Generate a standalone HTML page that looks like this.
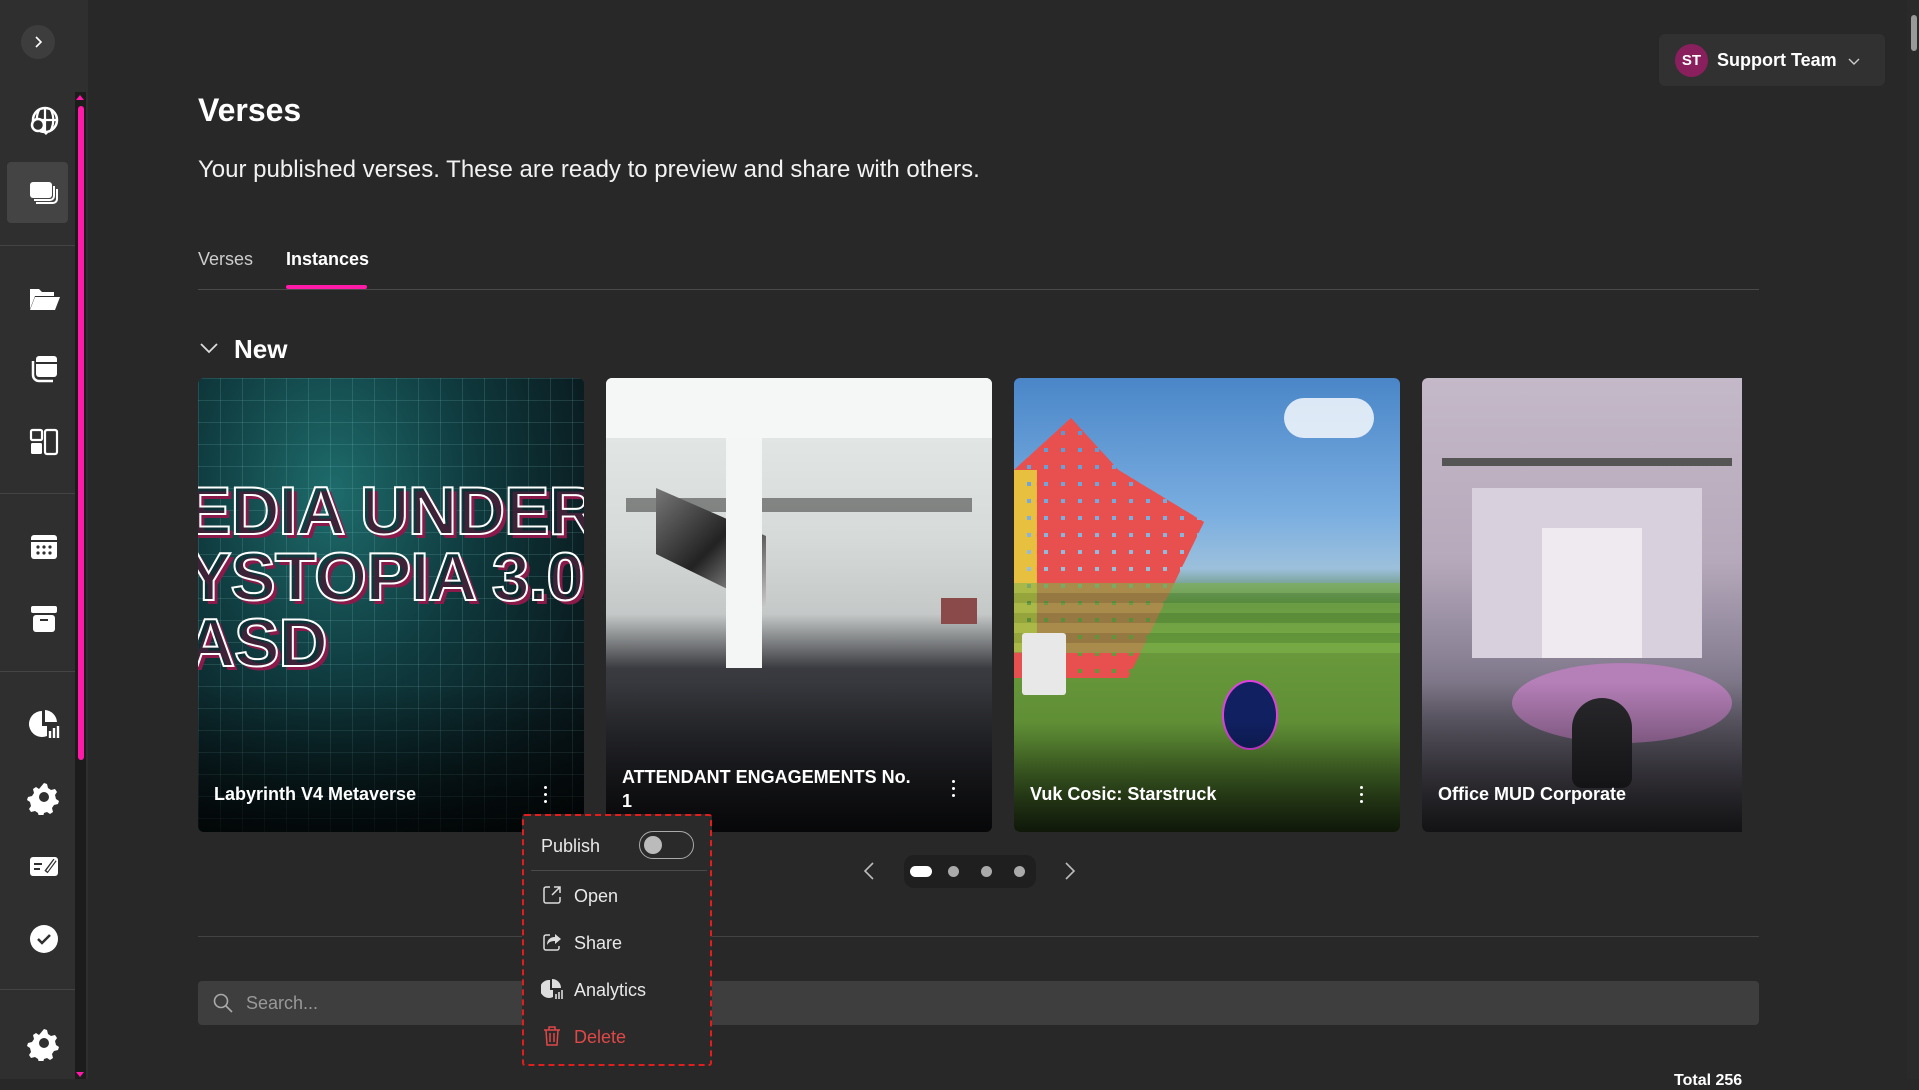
<!DOCTYPE html>
<html><head><meta charset="utf-8"><style>
*{box-sizing:border-box;margin:0;padding:0}
body{width:1919px;height:1079px;overflow:hidden;background:#282828;font-family:"Liberation Sans",sans-serif;color:#fff;position:relative}
.side{position:absolute;left:0;top:0;width:88px;height:1079px;background:#2f2f2f}
.track{position:absolute;left:75px;top:92px;width:11px;height:987px;background:#1c1c1c}
.thumb{position:absolute;left:78px;top:106px;width:6px;height:654px;background:#ff1aa8;border-radius:3px}
.sep{position:absolute;left:0;width:75px;height:1px;background:#444}
.ic{position:absolute;left:26px;width:36px;height:36px}
.abs{position:absolute}
.card{position:absolute;top:378px;height:454px;border-radius:6px;overflow:hidden}
.card .shade{position:absolute;left:0;right:0;bottom:0;height:150px;background:linear-gradient(rgba(0,0,0,0),rgba(0,0,0,.75))}
.card .t{position:absolute;left:16px;font-weight:bold;font-size:18px}
.dots3{position:absolute;width:4px}
.dots3 i{display:block;width:3px;height:3px;background:#fff;border-radius:50%;margin:0 0 4px}
.mi{position:absolute;left:541px;font-size:18px;color:#e8e8e8}
</style></head><body>
<div class="side">
  <div class="abs" style="left:21px;top:25px;width:34px;height:34px;border-radius:50%;background:#3d3d3d"></div>
  <svg class="abs" style="left:30px;top:34px" width="16" height="16" viewBox="0 0 16 16"><path d="M6 3l5 5-5 5" stroke="#fff" stroke-width="1.6" fill="none"/></svg>
  <div class="abs" style="left:7px;top:162px;width:61px;height:61px;border-radius:4px;background:#444"></div>
  <div class="sep" style="top:245px"></div><div class="sep" style="top:493px"></div><div class="sep" style="top:671px"></div><div class="sep" style="top:989px"></div>
  <svg class="ic" style="top:103px" viewBox="0 0 36 36"><circle cx="19" cy="17" r="12" fill="none" stroke="#fff" stroke-width="2.5"/><path d="M7 17h24M19 5v24M13 7c-3 6-3 14 0 20M25 7c3 6 3 14 0 20" stroke="#fff" stroke-width="2.2" fill="none"/><circle cx="12" cy="22" r="6" fill="#2f2f2f" stroke="#fff" stroke-width="2.5"/><path d="M16 26l5 5" stroke="#fff" stroke-width="3"/></svg>
  <svg class="ic" style="top:176px" viewBox="0 0 36 36"><rect x="4" y="6" width="22" height="16" rx="3" fill="#fff"/><path d="M28 10v10a4 4 0 0 1-4 4H8M31 13v10a4 4 0 0 1-4 4H10" stroke="#fff" stroke-width="2" fill="none"/></svg>
  <svg class="ic" style="top:280px" viewBox="0 0 36 36"><path d="M4 9h9l3 3h12v4H9l-5 13z" fill="#fff"/><path d="M9 17h25l-5 13H4z" fill="#fff"/></svg>
  <svg class="ic" style="top:351px" viewBox="0 0 36 36"><rect x="10" y="5" width="21" height="21" rx="3" fill="#fff"/><path d="M7 10v14a6 6 0 0 0 6 6h14" stroke="#fff" stroke-width="2.5" fill="none"/><path d="M10 12h21" stroke="#2f2f2f" stroke-width="2"/></svg>
  <svg class="ic" style="top:424px" viewBox="0 0 36 36"><rect x="5" y="6" width="11" height="10" rx="1.5" fill="none" stroke="#fff" stroke-width="2.2"/><rect x="5" y="19" width="11" height="11" rx="1.5" fill="#fff"/><rect x="19" y="6" width="12" height="24" rx="2" fill="none" stroke="#fff" stroke-width="2.2"/></svg>
  <svg class="ic" style="top:529px" viewBox="0 0 36 36"><rect x="5" y="6" width="26" height="24" rx="3" fill="#fff"/><path d="M5 12h26" stroke="#2f2f2f" stroke-width="2"/><g fill="#2f2f2f"><circle cx="12" cy="18" r="1.6"/><circle cx="18" cy="18" r="1.6"/><circle cx="24" cy="18" r="1.6"/><circle cx="12" cy="24" r="1.6"/><circle cx="18" cy="24" r="1.6"/><circle cx="24" cy="24" r="1.6"/></g></svg>
  <svg class="ic" style="top:601px" viewBox="0 0 36 36"><rect x="5" y="5" width="26" height="7" rx="2" fill="#fff"/><rect x="7" y="14" width="22" height="17" rx="3" fill="#fff"/><path d="M14 19h8" stroke="#2f2f2f" stroke-width="2"/></svg>
  <svg class="ic" style="top:706px" viewBox="0 0 36 36"><path d="M16 5a13 13 0 1 0 5 25V20H16z" fill="#fff"/><path d="M19 4a13 13 0 0 1 12 12H19z" fill="#fff"/><path d="M24 32v-7M28 32v-10M32 32v-12" stroke="#fff" stroke-width="2.4"/></svg>
  <svg class="ic" style="top:779px" viewBox="0 0 36 36"><path d="M18 4l3 1 1 4 3 2 4-1 2 3-2 3 1 4 3 2-1 3-4 1-2 3 1 4-3 2-3-2-3 1-1 4h-4l-1-4-3-2-4 1-2-3 2-3-1-4-3-2 1-3 4-1 2-3-1-4 3-2 3 2z" fill="#fff"/><circle cx="18" cy="18" r="5" fill="#2f2f2f"/></svg>
  <svg class="ic" style="top:848px" viewBox="0 0 36 36"><rect x="4" y="9" width="28" height="19" rx="3" fill="#fff"/><path d="M8 16h8M8 21h6" stroke="#2f2f2f" stroke-width="2"/><path d="M20 24l9-12" stroke="#2f2f2f" stroke-width="4"/><path d="M21 23l8-11" stroke="#fff" stroke-width="1.5"/></svg>
  <svg class="ic" style="top:921px" viewBox="0 0 36 36"><circle cx="18" cy="18" r="14" fill="#fff"/><path d="M12 18l4 4 8-8" stroke="#2f2f2f" stroke-width="2.5" fill="none"/></svg>
  <svg class="ic" style="top:1025px" viewBox="0 0 36 36"><path d="M18 4l3 1 1 4 3 2 4-1 2 3-2 3 1 4 3 2-1 3-4 1-2 3 1 4-3 2-3-2-3 1-1 4h-4l-1-4-3-2-4 1-2-3 2-3-1-4-3-2 1-3 4-1 2-3-1-4 3-2 3 2z" fill="#fff"/><circle cx="18" cy="18" r="5" fill="#2f2f2f"/></svg>
</div>
<div class="track"></div>
<div class="abs" style="left:76px;top:95px;width:0;height:0;border-left:4px solid transparent;border-right:4px solid transparent;border-bottom:5px solid #ff1aa8"></div>
<div class="thumb"></div>
<div class="abs" style="left:76px;top:1072px;border-left:4px solid transparent;border-right:4px solid transparent;border-top:5px solid #ff1aa8"></div>

<div class="abs" style="left:1907px;top:0;width:12px;height:1079px;background:#2a2a2a"></div>
<div class="abs" style="left:1911px;top:15px;width:6px;height:36px;background:#999;border-radius:3px"></div>

<div class="abs" style="left:198px;top:92px;font-size:32px;font-weight:bold">Verses</div>
<div class="abs" style="left:198px;top:156px;font-size:24px;color:#f2f2f2">Your published verses. These are ready to preview and share with others.</div>
<div class="abs" style="left:198px;top:249px;font-size:18px;color:#ccc">Verses</div>
<div class="abs" style="left:286px;top:249px;font-size:18px;font-weight:bold">Instances</div>
<div class="abs" style="left:198px;top:289px;width:1561px;height:1px;background:#4a4a4a"></div>
<div class="abs" style="left:286px;top:285px;width:81px;height:4px;border-radius:2px;background:#ff1aa8"></div>
<svg class="abs" style="left:199px;top:341px" width="20" height="14" viewBox="0 0 20 14"><path d="M2 3l8 8 8-8" stroke="#ddd" stroke-width="1.8" fill="none"/></svg>
<div class="abs" style="left:234px;top:334px;font-size:26px;font-weight:bold">New</div>

<div class="abs" style="left:1659px;top:34px;width:226px;height:52px;border-radius:6px;background:#313131"></div>
<div class="abs" style="left:1675px;top:44px;width:33px;height:33px;border-radius:50%;background:#8a1f5e;font-size:15px;font-weight:bold;text-align:center;line-height:33px">ST</div>
<div class="abs" style="left:1717px;top:50px;font-size:18px;font-weight:bold">Support Team</div>
<svg class="abs" style="left:1848px;top:58px" width="12" height="8" viewBox="0 0 12 8"><path d="M1 1l5 5 5-5" stroke="#ccc" stroke-width="1.4" fill="none"/></svg>

<div class="card" style="left:198px;width:386px;background:radial-gradient(ellipse at 35% 25%,#1e6b6b 0%,#0f3a3e 40%,#0a1c20 75%,#060d10 100%)">
  <div class="abs" style="inset:0;background-image:linear-gradient(rgba(150,220,220,.15) 1px,transparent 1px),linear-gradient(90deg,rgba(150,220,220,.15) 1px,transparent 1px);background-size:22px 22px"></div>
  <div class="abs" style="left:-12px;top:100px;font-size:68px;font-weight:bold;line-height:66px;color:rgba(10,40,45,.6);-webkit-text-stroke:2px #fff;text-shadow:4px 4px 0 #8a1a4a;white-space:nowrap;letter-spacing:-1px">EDIA UNDER<br>YSTOPIA 3.0<br>ASD</div>
  <div class="shade"></div>
  <div class="t" style="top:406px">Labyrinth V4 Metaverse</div>
  <div class="dots3" style="left:346px;top:408px"><i></i><i></i><i></i></div>
</div>
<div class="card" style="left:606px;width:386px;background:linear-gradient(#e8ecea 0%,#d6dad8 35%,#c4c8c7 52%,#3a3b40 64%,#1c1d22 100%)">
  <div class="abs" style="left:0;top:0;width:386px;height:60px;background:#f5f7f6"></div>
  <div class="abs" style="left:20px;top:120px;width:346px;height:14px;background:#2a2a2a;opacity:.5"></div>
  <div class="abs" style="left:50px;top:110px;width:110px;height:120px;background:linear-gradient(135deg,#777,#222 50%,#ccc);clip-path:polygon(0 0,100% 40%,100% 100%,0 55%)"></div>
  <div class="abs" style="left:120px;top:60px;width:36px;height:230px;background:#f4f6f5"></div>
  <div class="abs" style="left:335px;top:220px;width:36px;height:26px;background:#8a4a4a"></div>
  <div class="shade"></div>
  <div class="t" style="top:387px;line-height:24px">ATTENDANT ENGAGEMENTS No.<br>1</div>
  <div class="dots3" style="left:346px;top:402px"><i></i><i></i><i></i></div>
</div>
<div class="card" style="left:1014px;width:386px;background:linear-gradient(#4a86c8 0%,#7aaee0 30%,#9cc0dc 42%,#4b7a3a 50%,#6a9a3c 58%,#5d8c34 80%,#3c5e24 100%)">
  <div class="abs" style="left:270px;top:20px;width:90px;height:40px;border-radius:20px;background:#fff;opacity:.8"></div>
  <div class="abs" style="left:0;top:40px;width:190px;height:260px;background-image:linear-gradient(90deg,#e85050 0 13px,transparent 13px),linear-gradient(#e85050 0 13px,transparent 13px);background-size:17px 17px;clip-path:polygon(30% 0,55% 20%,100% 40%,80% 70%,60% 100%,0 100%,0 20%)"></div>
  <div class="abs" style="left:0;top:40px;width:190px;height:260px;background-image:linear-gradient(90deg,#e8c040 0 13px,transparent 13px),linear-gradient(#e8c040 0 13px,transparent 13px);background-size:17px 17px;clip-path:polygon(0 20%,12% 20%,12% 90%,0 90%)"></div>
  <div class="abs" style="left:0;top:205px;width:386px;height:70px;background:repeating-linear-gradient(#7fb24a 0 10px,#5e9238 10px 20px);opacity:.6"></div>
  <div class="abs" style="left:208px;top:302px;width:56px;height:70px;border-radius:50%;background:#102060;border:2px solid #e040e0"></div>
  <div class="abs" style="left:8px;top:255px;width:44px;height:62px;background:#e8e8e8;border-radius:3px"></div>
  <div class="shade" style="height:110px"></div>
  <div class="t" style="top:406px">Vuk Cosic: Starstruck</div>
  <div class="dots3" style="left:346px;top:408px"><i></i><i></i><i></i></div>
</div>
<div class="card" style="left:1422px;width:320px;border-radius:6px 0 0 6px;background:linear-gradient(#c4b9c8 0%,#b6a9bb 40%,#8e8599 60%,#6b6675 75%,#4a4850 100%)">
  <div class="abs" style="left:20px;top:80px;width:290px;height:8px;background:#555"></div>
  <div class="abs" style="left:50px;top:110px;width:230px;height:170px;background:#d8d0dc"></div>
  <div class="abs" style="left:120px;top:150px;width:100px;height:130px;background:#eeeaf0"></div>
  <div class="abs" style="left:90px;top:285px;width:220px;height:80px;border-radius:50%;background:#b57fb8"></div>
  <div class="abs" style="left:150px;top:320px;width:60px;height:90px;border-radius:30px 30px 10px 10px;background:#2a2a2e"></div>
  <div class="shade"></div>
  <div class="t" style="top:406px">Office MUD Corporate</div>
</div>

<svg class="abs" style="left:862px;top:861px" width="14" height="20" viewBox="0 0 14 20"><path d="M11 2l-8 8 8 8" stroke="#bbb" stroke-width="1.6" fill="none"/></svg>
<div class="abs" style="left:904px;top:855px;width:132px;height:33px;border-radius:10px;background:#1f1f1f"></div>
<div class="abs" style="left:910px;top:866px;width:22px;height:11px;border-radius:6px;background:#fff"></div>
<div class="abs" style="left:948px;top:866px;width:11px;height:11px;border-radius:50%;background:#aaa"></div>
<div class="abs" style="left:981px;top:866px;width:11px;height:11px;border-radius:50%;background:#aaa"></div>
<div class="abs" style="left:1014px;top:866px;width:11px;height:11px;border-radius:50%;background:#aaa"></div>
<svg class="abs" style="left:1063px;top:861px" width="14" height="20" viewBox="0 0 14 20"><path d="M3 2l8 8-8 8" stroke="#bbb" stroke-width="1.6" fill="none"/></svg>

<div class="abs" style="left:198px;top:936px;width:1561px;height:1px;background:#444"></div>
<div class="abs" style="left:198px;top:981px;width:1561px;height:44px;border-radius:4px;background:#3e3e3e"></div>
<svg class="abs" style="left:212px;top:992px" width="22" height="22" viewBox="0 0 22 22"><circle cx="9" cy="9" r="6.5" stroke="#aaa" stroke-width="1.6" fill="none"/><path d="M14 14l6 6" stroke="#aaa" stroke-width="1.6"/></svg>
<div class="abs" style="left:246px;top:993px;font-size:18px;color:#999">Search...</div>
<div class="abs" style="left:1674px;top:1072px;font-size:16px;font-weight:bold">Total 256</div>

<div class="abs" style="left:522px;top:814px;width:190px;height:252px;background:#2a2a2a;border:2px dashed #e01e1e;border-radius:3px"></div>
<div class="mi" style="top:836px">Publish</div>
<div class="abs" style="left:639px;top:831px;width:55px;height:28px;border-radius:14px;border:1.5px solid #aaa"></div>
<div class="abs" style="left:644px;top:836px;width:18px;height:18px;border-radius:50%;background:#bbb"></div>
<div class="abs" style="left:531px;top:870px;width:176px;height:1px;background:#4a4a4a"></div>
<svg class="abs" style="left:541px;top:884px" width="22" height="22" viewBox="0 0 22 22"><path d="M9 3H5a2 2 0 0 0-2 2v12a2 2 0 0 0 2 2h12a2 2 0 0 0 2-2v-4M13 3h6v6M19 3l-8 8" stroke="#ddd" stroke-width="1.5" fill="none"/></svg>
<div class="mi" style="left:574px;top:886px">Open</div>
<svg class="abs" style="left:541px;top:931px" width="22" height="22" viewBox="0 0 22 22"><path d="M9 4H5a2 2 0 0 0-2 2v11a2 2 0 0 0 2 2h11a2 2 0 0 0 2-2v-2" stroke="#ddd" stroke-width="1.5" fill="none"/><path d="M14 3l6 5-6 5v-3c-4 0-6 1-8 4 0-5 3-8 8-8z" fill="#ddd"/></svg>
<div class="mi" style="left:574px;top:933px">Share</div>
<svg class="abs" style="left:541px;top:978px" width="22" height="22" viewBox="0 0 22 22"><path d="M9 2a9 9 0 1 0 3 17v-7H9z" fill="#ddd"/><path d="M11 1a9 9 0 0 1 9 9h-9z" fill="#ddd"/><path d="M15 21v-5M18 21v-7M21 21v-9" stroke="#ddd" stroke-width="1.6"/></svg>
<div class="mi" style="left:574px;top:980px">Analytics</div>
<svg class="abs" style="left:541px;top:1025px" width="22" height="22" viewBox="0 0 22 22"><path d="M3 5h16M8 5V2h6v3M5 5l1 15h10l1-15M9 8v9M13 8v9" stroke="#e04848" stroke-width="1.5" fill="none"/></svg>
<div class="mi" style="left:574px;top:1027px;color:#e04848">Delete</div>
</body></html>
